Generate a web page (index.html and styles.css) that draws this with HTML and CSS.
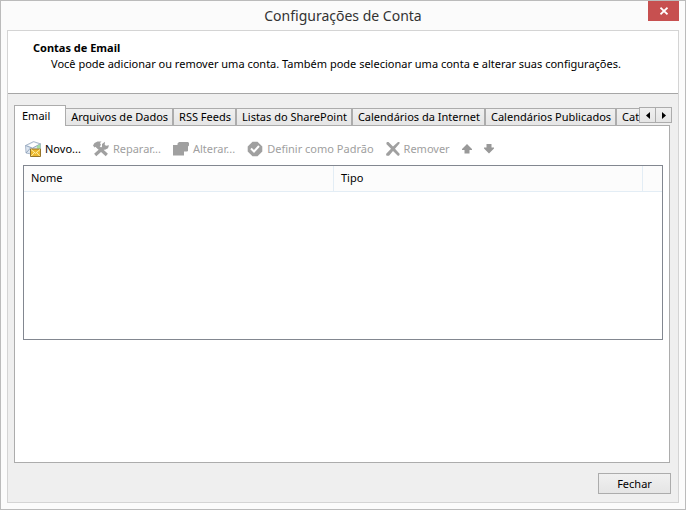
FILE: index.html
```html
<!DOCTYPE html>
<html lang="pt-BR">
<head>
    <meta charset="UTF-8">
    <meta name="viewport" content="width=device-width, initial-scale=1.0">
    <title>Configurações de Conta</title>
    <link rel="stylesheet" href="styles.css">
</head>
<body>
    <div class="window">
        <header class="title-bar">
            <h1>Configurações de Conta</h1>
            <button class="close-btn" type="button" aria-label="Fechar janela">
                <svg width="8" height="8" viewBox="0 0 8 8"><path d="M0.5 0.7L7.5 7.3M7.5 0.7L0.5 7.3" stroke="#fff" stroke-width="1.7"/></svg>
            </button>
        </header>
        <main class="dialog">
            <section class="intro">
                <h2>Contas de Email</h2>
                <p>Você pode adicionar ou remover uma conta. Também pode selecionar uma conta e alterar suas configurações.</p>
            </section>
            <section class="content">
                <div class="tab-bar">
                    <div class="tabs" role="tablist">
                        <button class="tab active" type="button" role="tab" aria-selected="true">Email</button>
                        <button class="tab" type="button" role="tab">Arquivos de Dados</button>
                        <button class="tab" type="button" role="tab">RSS Feeds</button>
                        <button class="tab" type="button" role="tab">Listas do SharePoint</button>
                        <button class="tab" type="button" role="tab">Calendários da Internet</button>
                        <button class="tab" type="button" role="tab">Calendários Publicados</button>
                        <button class="tab" type="button" role="tab">Catálogos</button>
                    </div>
                    <div class="scroll-btns">
                        <button type="button" aria-label="Anterior"><svg width="4" height="7" viewBox="0 0 4 7"><path d="M4 0V7L0 3.5Z"/></svg></button>
                        <button type="button" aria-label="Próximo"><svg width="4" height="7" viewBox="0 0 4 7"><path d="M0 0V7L4 3.5Z"/></svg></button>
                    </div>
                </div>
                <div class="panel" role="tabpanel">
                    <div class="toolbar">
                        <button class="tool" type="button">
                            <svg width="16" height="16" viewBox="0 0 16 16">
                                <path d="M0.5 4.5L8.5 0.6L15.5 2.8V10L9 13.5L1 12Z" fill="#dde6f0" stroke="#9aabc0" stroke-width="0.8"/>
                                <path d="M3 4.6L8.8 1.6L13.5 3.3L7.5 6.4Z" fill="#fff"/>
                                <path d="M0.5 4.5L7.5 7.2L15.5 2.8M1 12L5.5 7" fill="none" stroke="#8c9fb8" stroke-width="0.9"/>
                                <path d="M11.8 5L15.3 3.2V7.5H12Z" fill="#a3dba0"/>
                                <path d="M5.5 8H15.5V15.5H5.5Z" fill="#edb92f" stroke="#96752a"/>
                                <path d="M6 8.5L10.5 12.3L15 8.5M6.3 15L9.3 11.7M14.7 15L11.7 11.7" fill="none" stroke="#fff0a8"/>
                            </svg>
                            Novo...
                        </button>
                        <button class="tool" type="button" disabled>
                            <svg width="16" height="16" viewBox="0 0 16 16">
                                <path d="M4 5L13.8 14" fill="none" stroke="#a0a0a0" stroke-width="3.2"/>
                                <path d="M0 4.5L1.5 2L4.5 0.5H8.5L7 2L8 4L4.5 7.5L3 5.8L1.5 6.5Z" fill="#a0a0a0"/>
                                <path d="M2.2 14L10 7" fill="none" stroke="#a0a0a0" stroke-width="3.2"/>
                                <path d="M9 6.5V3L12 0.8L11.7 3.7L13 4.8L16 4.2L15 7.2L12 8.8L9.5 8.5Z" fill="#a0a0a0"/>
                            </svg>
                            Reparar...
                        </button>
                        <button class="tool" type="button" disabled>
                            <svg width="16" height="16" viewBox="0 0 16 16"><path d="M0 4H4.5V2.5L6 1H15L16 2V4.5L15 5.5V10L14 10.5H11V14.5H0Z" fill="#a0a0a0"/></svg>
                            Alterar...
                        </button>
                        <button class="tool" type="button" disabled>
                            <svg width="16" height="16" viewBox="0 0 16 16">
                                <path d="M5.5 0.8H10.5L15.3 5.5V10.5L10.5 15.2H5.5L0.7 10.5V5.5Z" fill="#a0a0a0"/>
                                <path d="M4 7.5L7 10.5L12 5" fill="none" stroke="#fff" stroke-width="2"/>
                            </svg>
                            Definir como Padrão
                        </button>
                        <button class="tool" type="button" disabled>
                            <svg width="14" height="14" viewBox="0 0 14 14"><path d="M0.8 0H2.5L7 4.5L12 0H13.5V1.5L9 6.7L13.8 12L13 13.8H11.8L7 9L3 13.8H0.5L0 12L5 6.7L0.3 2Z" fill="#a0a0a0"/></svg>
                            Remover
                        </button>
                        <button class="tool" type="button" aria-label="Mover para cima" disabled>
                            <svg width="10" height="10" viewBox="0 0 10 10"><path d="M5 0L10 5V6H7.5V9.5H2.5V6H0V5Z" fill="#999"/></svg>
                        </button>
                        <button class="tool" type="button" aria-label="Mover para baixo" disabled>
                            <svg width="10" height="10" viewBox="0 0 10 10"><path d="M5 9.5L10 4.5V3.5H7.5V0H2.5V3.5H0V4.5Z" fill="#999"/></svg>
                        </button>
                    </div>
                    <div class="account-list">
                        <table>
                            <thead>
                                <tr><th class="col">Nome</th><th class="col">Tipo</th><td></td></tr>
                            </thead>
                        </table>
                    </div>
                </div>
                <footer class="actions">
                    <button class="btn" type="button">Fechar</button>
                </footer>
            </section>
        </main>
    </div>
</body>
</html>
```
FILE: styles.css
```css
* {
    box-sizing: border-box;
}
body {
    margin: 0;
    font-family: "Noto Sans", "Open Sans", sans-serif;
    font-size: 11px;
    line-height: 16px;
    color: #000;
}
button {
    margin: 0;
    padding: 0;
    border: none;
    background: none;
    font: inherit;
    color: inherit;
}
h1, h2, p {
    margin: 0;
}
.window {
    display: flex;
    flex-direction: column;
    min-height: 100vh;
    padding: 0 6px;
    border: 1px solid #bbb;
    background-color: #fbfbfb;
}

/* title bar */
.title-bar {
    display: grid;
    grid-template-columns: 31px 1fr 31px;
    height: 29px;
}
.title-bar h1 {
    grid-column: 2;
    font-size: 14px;
    line-height: 29px;
    font-weight: normal;
    text-align: center;
    color: #333;
}
.close-btn {
    display: flex;
    align-items: center;
    justify-content: center;
    height: 20px;
    background-color: #c75050;
}

.dialog {
    flex: 1;
    display: flex;
    flex-direction: column;
    margin-bottom: 6px;
    border: 1px solid #d4d4d4;
    background-color: #efefef;
}
.intro {
    padding: 9px 25px 21px;
    border-bottom: 1px solid #a6a6a6;
    background-color: #fff;
}
.intro h2 {
    font-size: 11px;
    font-weight: bold;
}
.intro p {
    padding-left: 18px;
}
.content {
    flex: 1;
    display: flex;
    flex-direction: column;
    padding: 11px 7px 8px 6px;
}

/* tabs */
.tab-bar {
    display: flex;
    align-items: flex-end;
}
.tabs {
    flex: 1;
    min-width: 0;
    display: flex;
    align-items: flex-end;
    overflow: hidden;
}
.tab {
    flex: none;
    height: 18px;
    margin-right: -1px;
    padding: 0 4px 0 5px;
    border: 1px solid #acacac;
    border-right-width: 2px;
    border-bottom: none;
    background: linear-gradient(#f0f0f0, #e5e5e5);
    white-space: nowrap;
}
.tab.active {
    height: 20px;
    padding: 0 15px 0 7px;
    border-right-width: 1px;
    background: #fff;
}
.scroll-btns {
    display: flex;
    align-self: flex-start;
    padding-top: 2px;
}
.scroll-btns button {
    display: flex;
    align-items: center;
    justify-content: center;
    width: 17px;
    height: 16px;
    margin-right: -1px;
    border: 1px solid #acacac;
    background: linear-gradient(#f0f0f0, #e5e5e5);
}
.panel {
    flex: 1;
    padding: 12px 6px;
    margin-right: 1px;
    border: 1px solid #acacac;
    background-color: #fff;
}
/* the open tab runs into the panel */
.tab-bar {
    position: relative;
    margin-bottom: -1px;
}
.tab:not(.active) {
    border-bottom: 1px solid #acacac;
}
.tab.active {
    height: 21px;
}

/* toolbar */
.toolbar {
    display: flex;
    align-items: center;
    gap: 12px;
    height: 22px;
    padding-left: 4px;
}
.tool {
    display: flex;
    align-items: center;
    gap: 4px;
    white-space: nowrap;
}
.tool:disabled {
    color: #a0a0a0;
}

/* accounts */
.account-list {
    height: 175px;
    margin: 5px 0 0 2px;
    border: 1px solid #828790;
}
.account-list table {
    width: 100%;
    table-layout: fixed;
    border-collapse: collapse;
    background-color: #fcfcfc;
}
.account-list th,
.account-list td {
    height: 25px;
    padding: 0 7px;
    border-bottom: 1px solid #e3edf5;
    font-weight: normal;
    text-align: left;
}
.account-list th {
    border-right: 1px solid #e3edf5;
}
.account-list .col {
    width: 48.5%;
}

.actions {
    display: flex;
    justify-content: flex-end;
    padding-top: 10px;
}
.btn {
    width: 73px;
    height: 21px;
    border: 1px solid #acacac;
    background: linear-gradient(#f0f0f0, #e5e5e5);
}
```
